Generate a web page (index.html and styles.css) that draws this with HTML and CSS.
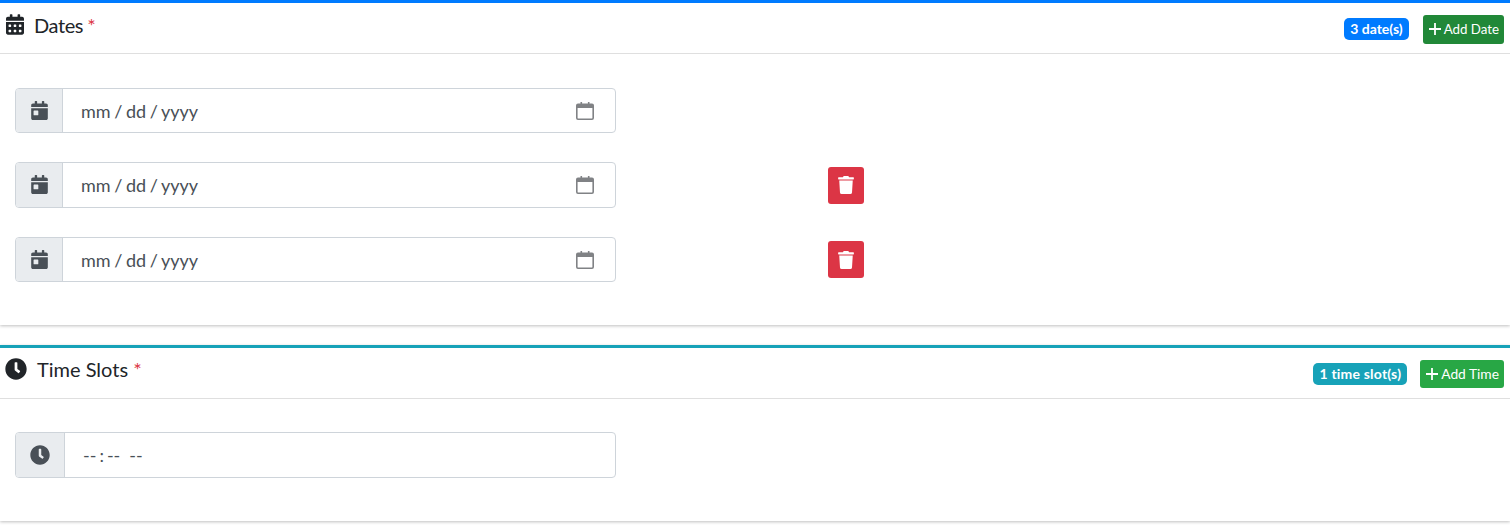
FILE: index.html
```html
<!DOCTYPE html>
<html lang="en">
<head>
  <meta charset="UTF-8">
  <title>Schedule</title>
  <link rel="stylesheet" href="styles.css">
</head>
<body>

<svg class="sprites" xmlns="http://www.w3.org/2000/svg">
  <symbol id="i-calendar-alt" viewBox="0 0 448 512"><path d="M0 464c0 26.5 21.5 48 48 48h352c26.5 0 48-21.5 48-48V192H0v272zm320-196c0-6.6 5.4-12 12-12h40c6.6 0 12 5.4 12 12v40c0 6.6-5.4 12-12 12h-40c-6.6 0-12-5.4-12-12v-40zm0 128c0-6.6 5.4-12 12-12h40c6.6 0 12 5.4 12 12v40c0 6.6-5.4 12-12 12h-40c-6.6 0-12-5.4-12-12v-40zM192 268c0-6.6 5.4-12 12-12h40c6.6 0 12 5.4 12 12v40c0 6.6-5.4 12-12 12h-40c-6.6 0-12-5.4-12-12v-40zm0 128c0-6.6 5.4-12 12-12h40c6.6 0 12 5.4 12 12v40c0 6.6-5.4 12-12 12h-40c-6.6 0-12-5.4-12-12v-40zM64 268c0-6.6 5.4-12 12-12h40c6.6 0 12 5.4 12 12v40c0 6.6-5.4 12-12 12H76c-6.6 0-12-5.4-12-12v-40zm0 128c0-6.6 5.4-12 12-12h40c6.6 0 12 5.4 12 12v40c0 6.6-5.4 12-12 12H76c-6.6 0-12-5.4-12-12v-40zM400 64h-48V16c0-8.8-7.2-16-16-16h-32c-8.8 0-16 7.2-16 16v48H160V16c0-8.8-7.2-16-16-16h-32c-8.8 0-16 7.2-16 16v48H48C21.5 64 0 85.5 0 112v48h448v-48c0-26.5-21.5-48-48-48z"/></symbol>
  <symbol id="i-calendar-day" viewBox="0 0 448 512"><path d="M0 464c0 26.5 21.5 48 48 48h352c26.5 0 48-21.5 48-48V192H0v272zm64-192c0-8.8 7.2-16 16-16h96c8.8 0 16 7.2 16 16v96c0 8.8-7.2 16-16 16H80c-8.8 0-16-7.2-16-16v-96zM400 64h-48V16c0-8.8-7.2-16-16-16h-32c-8.8 0-16 7.2-16 16v48H160V16c0-8.8-7.2-16-16-16h-32c-8.8 0-16 7.2-16 16v48H48C21.5 64 0 85.5 0 112v48h448v-48c0-26.5-21.5-48-48-48z"/></symbol>
  <symbol id="i-clock" viewBox="0 0 512 512"><path d="M256,8C119,8,8,119,8,256S119,504,256,504,504,393,504,256,393,8,256,8Zm92.49,313h0l-20,25a16,16,0,0,1-22.49,2.5h0l-67-49.72a40,40,0,0,1-15-31.23V112a16,16,0,0,1,16-16h32a16,16,0,0,1,16,16V256l58,42.5A16,16,0,0,1,348.49,321Z"/></symbol>
  <symbol id="i-trash" viewBox="0 0 448 512"><path d="M432 32H312l-9.4-18.7A24 24 0 0 0 281.1 0H166.8a23.72 23.72 0 0 0-21.4 13.3L136 32H16A16 16 0 0 0 0 48v32a16 16 0 0 0 16 16h416a16 16 0 0 0 16-16V48a16 16 0 0 0-16-16zM53.2 467a48 48 0 0 0 47.9 45h245.8a48 48 0 0 0 47.9-45L416 128H32z"/></symbol>
  <symbol id="i-plus" viewBox="0 0 12 12"><path d="M5.100 0h1.800v5.100H12v1.800H6.900V12H5.100V6.900H0V5.100h5.100z"/></symbol>
  <symbol id="i-native-cal" viewBox="0 0 20 20"><path d="M3 2.500h2.500V1h1.600v1.500h5.800V1h1.600v1.500H17a2 2 0 0 1 2 2V17a2 2 0 0 1-2 2H3a2 2 0 0 1-2-2V4.500a2 2 0 0 1 2-2zM2.600 7v10c0 .25.15.4.4.4h14c.25 0 .4-.15.4-.4V7z"/></symbol>
</svg>

<section class="card card-dates">
  <header class="card-header">
    <h3 class="card-title">
      <svg class="title-icon"><use href="#i-calendar-alt"/></svg>Dates <span class="req">*</span>
    </h3>
    <div class="card-tools">
      <span class="badge badge-blue">3 date(s)</span>
      <button class="btn btn-dark-green"><svg class="btn-icon"><use href="#i-plus"/></svg>Add Date</button>
    </div>
  </header>
  <div class="card-body">
    <div class="date-row">
      <div class="input-group">
        <span class="prepend"><svg class="prepend-icon"><use href="#i-calendar-day"/></svg></span>
        <div class="control"><span>mm / dd / yyyy</span><svg class="picker-icon"><use href="#i-native-cal"/></svg></div>
      </div>
    </div>
    <div class="date-row">
      <div class="input-group">
        <span class="prepend"><svg class="prepend-icon"><use href="#i-calendar-day"/></svg></span>
        <div class="control"><span>mm / dd / yyyy</span><svg class="picker-icon"><use href="#i-native-cal"/></svg></div>
      </div>
      <button class="btn-delete"><svg><use href="#i-trash"/></svg></button>
    </div>
    <div class="date-row">
      <div class="input-group">
        <span class="prepend"><svg class="prepend-icon"><use href="#i-calendar-day"/></svg></span>
        <div class="control"><span>mm / dd / yyyy</span><svg class="picker-icon"><use href="#i-native-cal"/></svg></div>
      </div>
      <button class="btn-delete"><svg><use href="#i-trash"/></svg></button>
    </div>
  </div>
</section>

<section class="card card-times">
  <header class="card-header">
    <h3 class="card-title">
      <svg class="title-icon clock"><use href="#i-clock"/></svg>Time Slots <span class="req">*</span>
    </h3>
    <div class="card-tools">
      <span class="badge badge-teal">1 time slot(s)</span>
      <button class="btn btn-green"><svg class="btn-icon"><use href="#i-plus"/></svg>Add Time</button>
    </div>
  </header>
  <div class="card-body">
    <div class="date-row">
      <div class="input-group">
        <span class="prepend wide"><svg class="prepend-icon clock"><use href="#i-clock"/></svg></span>
        <div class="control time"><span>-- : --&nbsp;&nbsp; --</span></div>
      </div>
    </div>
  </div>
</section>

</body>
</html>
```

FILE: styles.css
```css
body {
  margin: 0;
  background-color: #fff;
  color: #212529;
  font-family: "Lato", "Noto Sans", sans-serif;
  overflow: hidden;
}

.sprites {
  display: none;
}

.card {
  background-color: #fff;
  border-top: 3px solid #007bff;
  box-shadow: 0 1px 3px rgba(0, 0, 0, .25);
  margin-bottom: 20px;
}

.card-times {
  border-top-color: #17a2b8;
}

.card-header {
  display: flex;
  justify-content: space-between;
  align-items: center;
  height: 50px;
  padding: 0 6px;
  border-bottom: 1px solid #dfdfdf;
}

.card-title {
  display: flex;
  align-items: center;
  margin: 0 0 7px;
  font-size: 20px;
  font-weight: 400;
  white-space: pre;
  letter-spacing: -.4px;
  word-spacing: -.5px;
}

.card-times .card-title {
  margin-bottom: 8px;
  letter-spacing: 0;
  word-spacing: 0;
}

.title-icon {
  width: 18px;
  height: 21px;
  margin-right: 10px;
  fill: #212529;
}

.title-icon.clock {
  width: 22px;
  height: 22px;
  margin-left: -1px;
  margin-right: 10px;
}

.req {
  color: #dc3545;
}

.card-tools {
  display: flex;
  align-items: center;
  gap: 14px;
  margin-top: 2px;
}

.badge {
  padding: 3px 6px;
  border-radius: 5px;
  color: #fff;
  font-size: 14px;
  font-weight: 700;
  line-height: 16px;
}

.badge-blue { background-color: #007bff; }
.badge-teal {
  background-color: #17a2b8;
  letter-spacing: .2px;
  margin-right: -1px;
}

.btn {
  display: flex;
  align-items: center;
  height: 28px;
  padding: 0 5px 0 6px;
  border: 0;
  border-radius: 3px;
  color: #fff;
  font-family: inherit;
  font-size: 14px;
}

.btn-dark-green {
  height: 29px;
  background-color: #218838;
  font-size: 13.3px;
}

.btn-green {
  background-color: #28a745;
  font-size: 13.8px;
}

.btn-icon {
  width: 12px;
  height: 12px;
  margin-right: 3px;
  fill: #fff;
}

.card-body {
  padding: 33.6px 15px 42.7px;
  display: flex;
  flex-direction: column;
  gap: 29.1px;
}

.card-times .card-body {
  padding: 33px 15px 43px;
}

.date-row {
  display: flex;
  align-items: center;
  gap: 212px;
}

.input-group {
  display: flex;
  width: 601px;
  height: 45.5px;
  box-sizing: border-box;
  border: 1px solid #ced4da;
  border-radius: 4px;
}

.card-times .input-group {
  height: 46px;
}

.prepend {
  display: flex;
  justify-content: center;
  align-items: center;
  width: 46px;
  background-color: #e9ecef;
  border-right: 1px solid #ced4da;
  border-radius: 3px 0 0 3px;
}

.prepend.wide {
  width: 48px;
}

.prepend-icon {
  width: 17px;
  height: 19px;
  fill: #495057;
}

.prepend-icon.clock {
  width: 20px;
  height: 20px;
}

.control {
  flex: 1;
  display: flex;
  justify-content: space-between;
  align-items: center;
  padding: .5px 20px 0 18px;
  color: #495057;
  font-size: 18px;
  word-spacing: -1px;
}

.control.time {
  padding-left: 18px;
  word-spacing: -1.6px;
}

.picker-icon {
  width: 20px;
  height: 20px;
  fill: #808285;
}

.btn-delete {
  display: flex;
  justify-content: center;
  align-items: center;
  width: 36px;
  height: 37px;
  margin-top: .2px;
  padding: 0;
  border: 0;
  border-radius: 3px;
  background-color: #dc3545;
}

.btn-delete svg {
  width: 16px;
  height: 18px;
  fill: #fff;
}
```
